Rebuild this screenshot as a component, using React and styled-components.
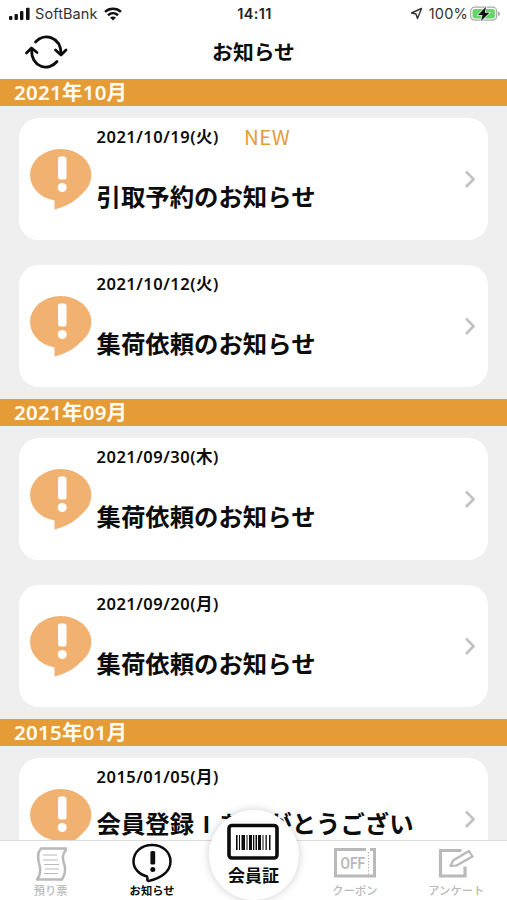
import React from 'react';
import styled, { createGlobalStyle } from 'styled-components';

const GlobalStyle = createGlobalStyle`
  * {
    box-sizing: border-box;
  }
  body {
    margin: 0;
    background: #efeff0;
    font-family: "Noto Sans", "Noto Sans CJK JP", sans-serif;
    color: #0c0c0c;
  }
`

const Screen = styled.div`
  width: 507px;
  height: 900px;
  display: flex;
  flex-direction: column;
  overflow: hidden;
  background: #efeff0;
`

const StatusBar = styled.div`
  height: 27px;
  flex: none;
  display: grid;
  grid-template-columns: 1fr auto 1fr;
  align-items: center;
  padding: 0 6px 0 9px;
  background: #fff;
  font-family: Inter, sans-serif;
  font-size: 14.5px;
  line-height: 27px;
  color: #333;
`

const StatusSide = styled.div`
  display: flex;
  align-items: center;
  justify-content: ${(props) => (props.$end ? 'flex-end' : 'flex-start')};

  span {
    margin: ${(props) => (props.$end ? '0 2px 0 6px' : '0 6px 0 5px')};
    letter-spacing: ${(props) => (props.$end ? '0.2px' : '0.1px')};
  }
`

const Clock = styled.div`
  font-weight: 600;
  font-size: 14.5px;
  letter-spacing: 0.4px;
  color: #222;
  margin-left: -1px;
`

const NavBar = styled.header`
  height: 52px;
  flex: none;
  display: grid;
  grid-template-columns: 92px 1fr 92px;
  align-items: center;
  background: #fff;

  svg {
    margin: -2px 0 0 24px;
  }
`

const NavTitle = styled.h1`
  margin: 0;
  padding-bottom: 3px;
  text-align: center;
  font-size: 20.8px;
  line-height: 30px;
  font-weight: 700;
`

const List = styled.main`
  flex: 1;
  min-height: 0;
  overflow: hidden;
`

const MonthBar = styled.h2`
  margin: 0;
  height: 27px;
  padding-left: 14px;
  background: #e59c37;
  color: #fffdf4;
  font-size: 20.5px;
  line-height: 27px;
  font-weight: 600;
  letter-spacing: 0.25px;
`

const Cards = styled.div`
  display: flex;
  flex-direction: column;
  gap: 24.5px;
  padding: 12px 19px;
`

const Card = styled.article`
  height: 122.25px;
  flex: none;
  display: grid;
  grid-template-columns: 77.5px 1fr 23.5px;
  border-radius: 20px;
  background: #fff;
`

const BubbleCell = styled.div`
  padding: 30px 0 0 11px;
`

const CardBody = styled.div`
  min-width: 0;
  white-space: nowrap;
`

const DateRow = styled.div`
  display: flex;
  height: 38px;
  line-height: 38px;
  font-size: 16.5px;
  font-weight: 600;
  letter-spacing: 0.5px;
`

const NewLabel = styled.span`
  margin-left: 25px;
  line-height: 36px;
  font-family: "Noto Sans CJK JP", sans-serif;
  font-size: 20.5px;
  font-weight: 400;
  color: #e59c37;
`

const CardTitle = styled.div`
  margin-top: ${(props) => (props.$raised ? '9px' : '22px')};
  height: 36px;
  line-height: 36px;
  font-family: "Noto Sans CJK JP", sans-serif;
  font-size: 24.4px;
  font-weight: 700;
`

const FullWidth = styled.span`
  display: inline-block;
  width: 1em;
  text-align: center;
  line-height: 1;
  font-family: "Liberation Sans", sans-serif;
`

const ArrowCell = styled.div`
  display: flex;
  align-items: center;
`

const TabBar = styled.nav`
  height: 60px;
  flex: none;
  display: grid;
  grid-template-columns: repeat(5, 1fr);
  border-top: 1px solid #dcdcdc;
  background: #fff;
`

const Tab = styled.div`
  display: flex;
  flex-direction: column;
  align-items: center;
  justify-content: flex-end;
  color: ${(props) => (props.$active ? '#0c0c0c' : '#b9b9b9')};
  font-size: 11.3px;
  line-height: 16px;
  font-weight: ${(props) => (props.$active ? 700 : 500)};
  padding-bottom: 1px;

  svg {
    margin-bottom: ${(props) => props.$lift || 0}px;
  }
`

const CenterTab = styled.div`
  width: 90px;
  height: 90px;
  margin: -31px -1px 0 0;
  justify-self: center;
  position: relative;
  z-index: 1;
  display: flex;
  flex-direction: column;
  align-items: center;
  gap: 4px;
  padding: 13px 1px 0 0;
  border-radius: 50%;
  background: #fff;
  box-shadow: 0 0 8px rgba(0, 0, 0, 0.2);
  font-size: 17px;
  line-height: 24px;
  font-weight: 700;
`

const SignalIcon = () => (
  <svg width="21" height="14" viewBox="0 0 21 14" fill="#111">
    <rect x="0" y="9" width="3.4" height="4" rx="1" />
    <rect x="5.500" y="7" width="3.4" height="6" rx="1" />
    <rect x="11" y="4" width="3.4" height="9" rx="1" />
    <rect x="17" y="0.8" width="3.6" height="12.2" rx="1" />
  </svg>
)

const WifiIcon = () => (
  <svg width="18" height="14" viewBox="0 0 18 14" fill="none" stroke="#111" strokeWidth="2.5">
    <path d="M1 4.9C5.5 .7 12.500 .7 17 4.900" />
    <path d="M4 8.300C7 5.600 11 5.600 14 8.300" />
    <path d="M9 13.500L6 10.600Q9 8.300 12 10.600Z" fill="#111" stroke="none" />
  </svg>
)

const LocationIcon = () => (
  <svg width="13" height="13" viewBox="0 0 13 13" fill="none" stroke="#333" strokeWidth="1.4" strokeLinejoin="round">
    <path d="M11.500 1.500L1.500 6L6 7L7.500 11.500Z" />
  </svg>
)

const BatteryIcon = () => (
  <svg width="31" height="16" viewBox="0 0 31 16">
    <rect x=".7" y="1.200" width="26" height="13" rx="4" fill="#fff" stroke="#aaa" strokeWidth="1.200" />
    <rect x="2.500" y="3" width="22.400" height="9.500" rx="2.500" fill="#67d36b" />
    <path d="M28 5.500Q30 6 30 7.800T28 10Z" fill="#aaa" />
    <path d="M16 .8L8 9H12.500L11 15L19.500 6.800H14.800Z" fill="#111" stroke="#fff" strokeWidth="1.200" paintOrder="stroke" />
  </svg>
)

const RefreshIcon = () => (
  <svg width="44" height="36" viewBox="0 0 44 36" fill="none" stroke="#0c0c0c" strokeWidth="2.800" strokeLinecap="round" strokeLinejoin="round">
    <path d="M11.500 8C20 -1.500 37 2.500 37 20" />
    <path d="M31.500 16L37 21L42 16" />
    <path d="M33 27.500C24.500 38 7.500 33.500 7.500 15.500" />
    <path d="M2.500 19L7.500 14L13 18.500" />
  </svg>
)

const BubbleIcon = () => (
  <svg width="62" height="62" viewBox="0 0 62 62">
    <ellipse cx="30.700" cy="27" rx="30.700" ry="26" fill="#f0b171" />
    <path d="M24.500 50V61.500Q43 57 53 44.500Z" fill="#f0b171" />
    <rect x="28" y="8.500" width="8.500" height="23" rx="2.500" fill="#fff" />
    <circle cx="32.200" cy="39.500" r="4.500" fill="#fff" />
  </svg>
)

const ArrowIcon = () => (
  <svg width="11" height="18" viewBox="0 0 11 18" fill="none" stroke="#c1c1c1" strokeWidth="2.600">
    <path d="M1 1.500L8.500 9.200L1 17" />
  </svg>
)

const SlipIcon = () => (
  <svg width="32" height="36" viewBox="0 0 32 36" fill="none" stroke="#b9b9b9" strokeWidth="2.500" strokeLinejoin="round">
    <path d="M6 2.500H32C27 8 27 12 29.500 19C31 25 30 29 27 33.500H2C5.500 29 6 25 4.500 19C2.500 12 2 7 6 2.500Z" />
    <path d="M8 9H22M8 14H23M9 18.500H24M10 23H24M9 27.500H23" strokeWidth="1.200" />
  </svg>
)

const NoticeIcon = () => (
  <svg width="42" height="40" viewBox="0 0 42 40">
    <path
      d="M16 33.500C8 31.500 2.500 25.500 2.500 18.500C2.500 9 10.500 2 21 2S39.500 9 39.500 18.500C39.500 28.500 30 35.500 17.500 38C16.500 38 16 37 16.500 35.500Z"
      fill="none"
      stroke="#0c0c0c"
      strokeWidth="2.500"
      strokeLinejoin="round"
    />
    <rect x="19.400" y="8" width="4.800" height="13.500" rx="1.500" fill="#0c0c0c" />
    <circle cx="21.800" cy="26.500" r="2.500" fill="#0c0c0c" />
  </svg>
)

// [x, width] of every bar in the member card barcode
const bars = [
  [9, 1.6], [12, 1], [14.500, 3.500], [19.500, 1], [22, 3],
  [26, 1.300], [28.500, 1.500], [31, 3], [35.500, 1], [38.500, 1.300], [42, 1.500],
]

const BarcodeIcon = () => (
  <svg width="52" height="37" viewBox="0 0 52 37">
    <rect x="2" y="2.500" width="48" height="32.500" rx="3" fill="none" stroke="#0c0c0c" strokeWidth="3.600" />
    {bars.map(([x, w]) => (
      <rect key={x} x={x} y="12" width={w} height="15" fill="#0c0c0c" />
    ))}
  </svg>
)

const CouponIcon = () => (
  <svg width="44" height="33" viewBox="0 0 44 33">
    <path d="M33 2.500H2.500V29H41.500V2.500H37" fill="none" stroke="#b9b9b9" strokeWidth="3" />
    <path d="M35.500 5V28" stroke="#b9b9b9" strokeWidth="1.200" strokeDasharray="1.500 1.500" />
    <text x="7.500" y="21.500" textLength="24.500" lengthAdjust="spacingAndGlyphs" fill="#b9b9b9" fontFamily="Roboto, sans-serif" fontSize="16" fontWeight="600">OFF</text>
  </svg>
)

const SurveyIcon = () => (
  <svg width="36" height="33" viewBox="0 0 36 33" fill="none" stroke="#b9b9b9">
    <path d="M23.500 3.500H2.500V29H27V19.500" strokeWidth="3.200" />
    <path d="M12.500 19L15 13.500L31 4L34.500 9.500L18.500 18.500Z" strokeWidth="2.200" strokeLinejoin="round" />
  </svg>
)

const months = [
  {
    label: '2021年10月',
    items: [
      { date: '2021/10/19(火)', title: '引取予約のお知らせ', isNew: true },
      { date: '2021/10/12(火)', title: '集荷依頼のお知らせ' },
    ],
  },
  {
    label: '2021年09月',
    items: [
      { date: '2021/09/30(木)', title: '集荷依頼のお知らせ' },
      { date: '2021/09/20(月)', title: '集荷依頼のお知らせ' },
    ],
  },
  {
    label: '2015年01月',
    items: [
      {
        date: '2015/01/05(月)',
        title: <>会員登録<FullWidth>I</FullWidth>ありがとうござい</>,
        raised: true,
      },
    ],
  },
]

const NoticeCard = ({ date, title, isNew, raised }) => (
  <Card>
    <BubbleCell>
      <BubbleIcon />
    </BubbleCell>
    <CardBody>
      <DateRow>
        {date}
        {isNew && <NewLabel>NEW</NewLabel>}
      </DateRow>
      <CardTitle $raised={raised}>{title}</CardTitle>
    </CardBody>
    <ArrowCell>
      <ArrowIcon />
    </ArrowCell>
  </Card>
)

const App = () => (
  <>
    <GlobalStyle />
    <Screen>
      <StatusBar>
        <StatusSide>
          <SignalIcon />
          <span>SoftBank</span>
          <WifiIcon />
        </StatusSide>
        <Clock>14:11</Clock>
        <StatusSide $end>
          <LocationIcon />
          <span>100%</span>
          <BatteryIcon />
        </StatusSide>
      </StatusBar>
      <NavBar>
        <RefreshIcon />
        <NavTitle>お知らせ</NavTitle>
      </NavBar>
      <List>
        {months.map((month) => (
          <section key={month.label}>
            <MonthBar>{month.label}</MonthBar>
            <Cards>
              {month.items.map((item) => (
                <NoticeCard key={item.date} {...item} />
              ))}
            </Cards>
          </section>
        ))}
      </List>
      <TabBar>
        <Tab $lift={1}>
          <SlipIcon />
          預り票
        </Tab>
        <Tab $active>
          <NoticeIcon />
          お知らせ
        </Tab>
        <CenterTab>
          <BarcodeIcon />
          会員証
        </CenterTab>
        <Tab $lift={3}>
          <CouponIcon />
          クーポン
        </Tab>
        <Tab $lift={3}>
          <SurveyIcon />
          アンケート
        </Tab>
      </TabBar>
    </Screen>
  </>
)

export default App;
